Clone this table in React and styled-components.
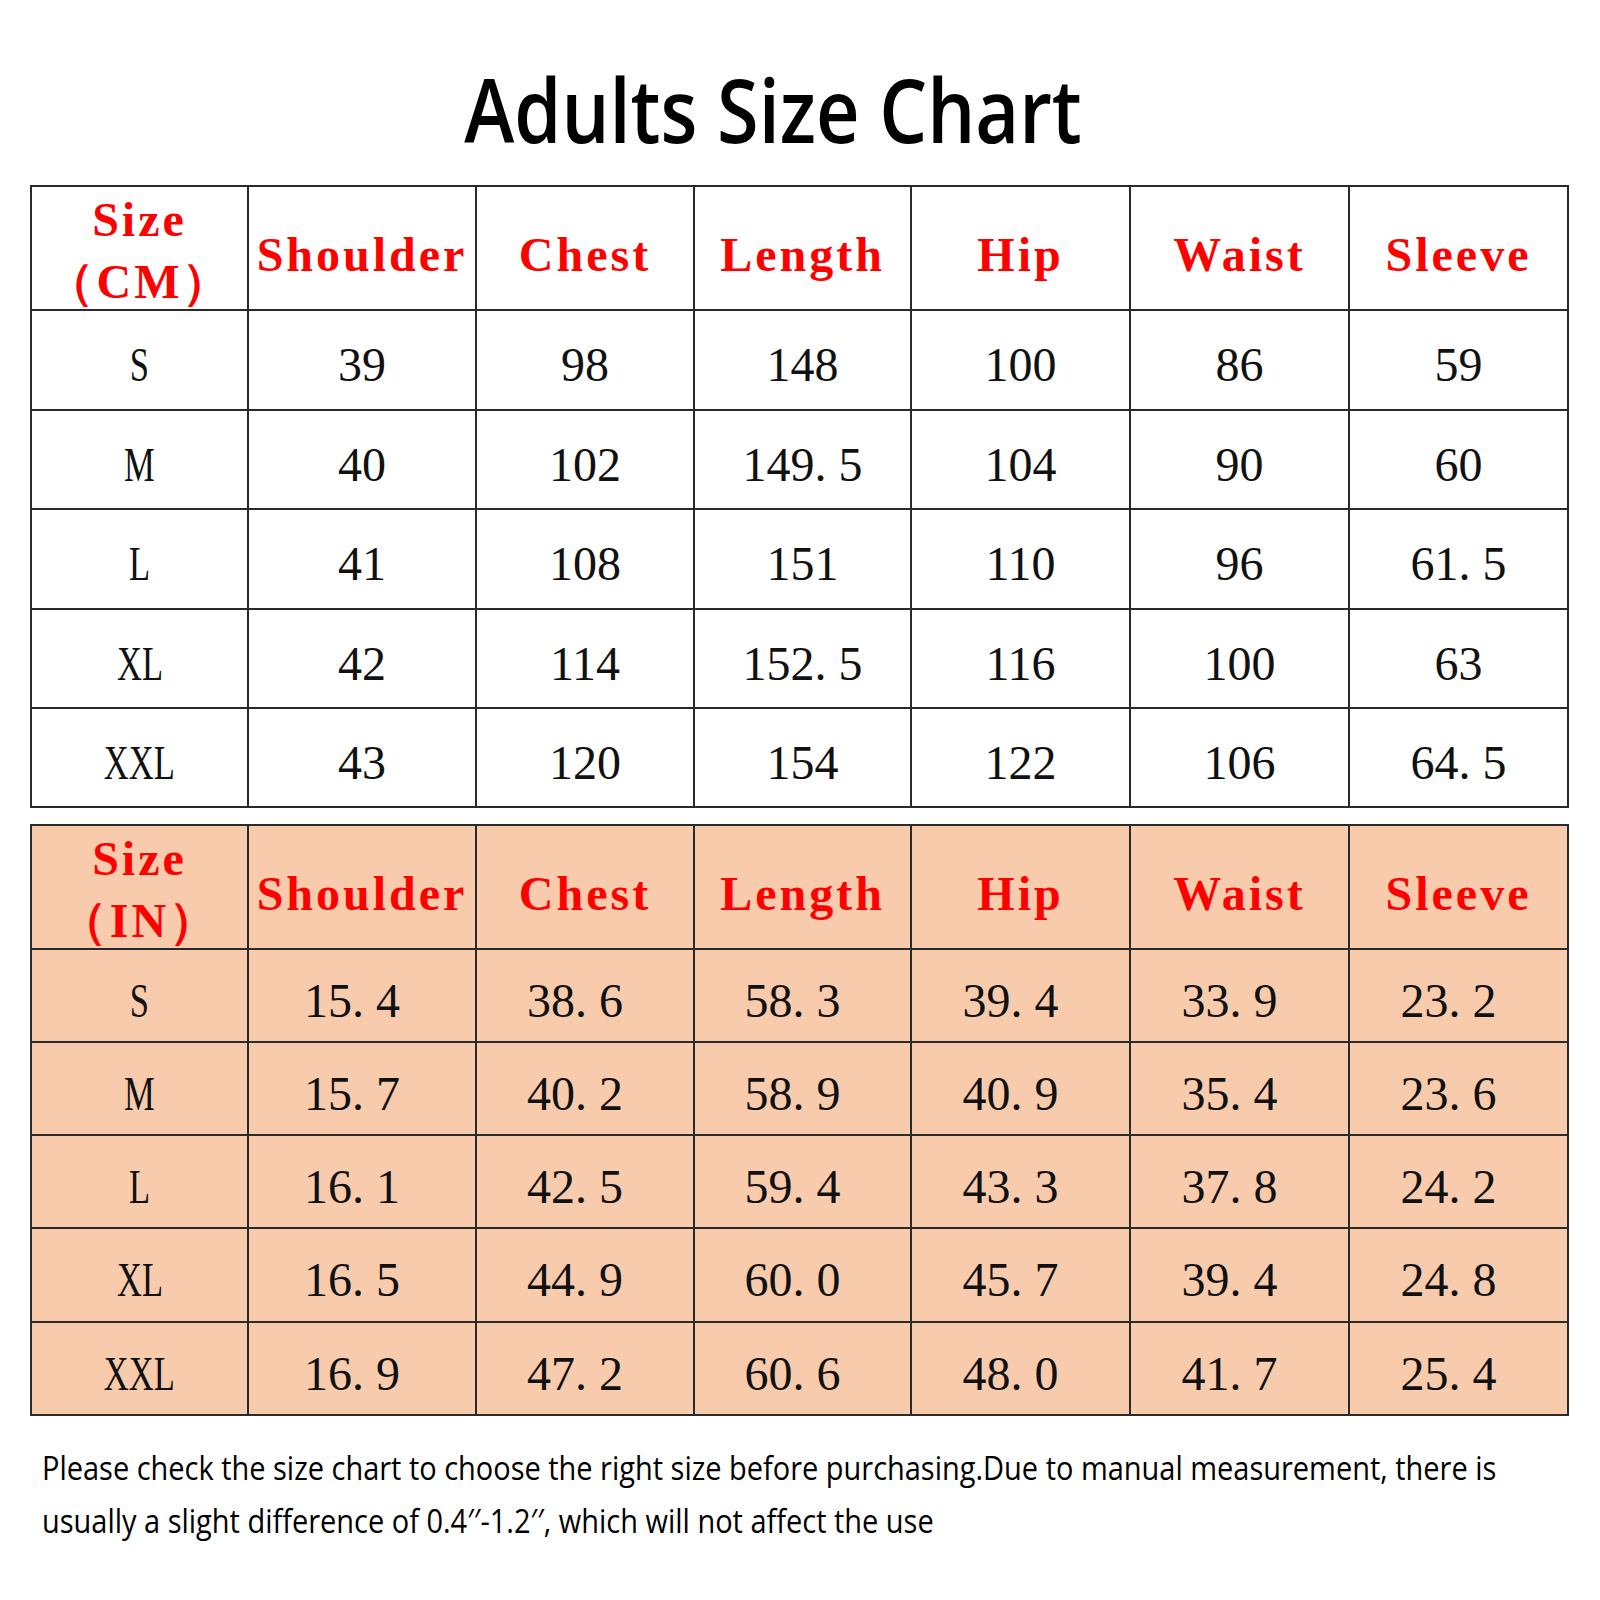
import React from 'react';
import styled, { createGlobalStyle } from 'styled-components';

const GlobalStyle = createGlobalStyle`
  html, body {
    margin: 0;
    padding: 0;
    background: #fff;
  }
`;

const header = ['Shoulder', 'Chest', 'Length', 'Hip', 'Waist', 'Sleeve'];

const cmRows = [
  ['S', '39', '98', '148', '100', '86', '59'],
  ['M', '40', '102', '149.5', '104', '90', '60'],
  ['L', '41', '108', '151', '110', '96', '61.5'],
  ['XL', '42', '114', '152.5', '116', '100', '63'],
  ['XXL', '43', '120', '154', '122', '106', '64.5'],
];

const inRows = [
  ['S', '15.4', '38.6', '58.3', '39.4', '33.9', '23.2'],
  ['M', '15.7', '40.2', '58.9', '40.9', '35.4', '23.6'],
  ['L', '16.1', '42.5', '59.4', '43.3', '37.8', '24.2'],
  ['XL', '16.5', '44.9', '60.0', '45.7', '39.4', '24.8'],
  ['XXL', '16.9', '47.2', '60.6', '48.0', '41.7', '25.4'],
];

// numbers in the chart render with a full-width dot
function Num({ value }) {
  const parts = value.split('.');
  if (parts.length === 1) return value;
  return (
    <>
      {parts[0]}
      <Dot>.</Dot>
      {parts[1]}
    </>
  );
}

function SizeTable({ unit, rows, rowHeights, tint, shift }) {
  return (
    <Grid $rows={rowHeights}>
      <HeadCell $tint={tint} $stack>
        <span>Size</span>
        <span>（{unit}）</span>
      </HeadCell>
      {header.map((h) => (
        <HeadCell key={h} $tint={tint}>{h}</HeadCell>
      ))}
      {rows.map((row) =>
        row.map((v, i) => (
          <Cell key={row[0] + i} $tint={tint} $shift={i === 0 ? 0 : shift}>
            {i === 0 ? <Narrow>{v}</Narrow> : <Num value={v} />}
          </Cell>
        ))
      )}
    </Grid>
  );
}

export default function App() {
  return (
    <Page>
      <GlobalStyle />
      <Title>
        <TitleText>Adults Size Chart</TitleText>
      </Title>
      <SizeTable unit="CM" rows={cmRows} tint="#fff" shift={0}
        rowHeights="122px 98px 97px 98px 97px 97px" />
      <Spacer />
      <SizeTable unit="IN" rows={inRows} tint="#f8cbad" shift={20}
        rowHeights="122px 91px 91px 91px 92px 91px" />
      <Note>
        <NoteText>
          Please check the size chart to choose the right size before purchasing.Due to manual measurement, there is
          <br />
          usually a slight difference of 0.4′′-1.2′′, which will not affect the use
        </NoteText>
      </Note>
    </Page>
  );
}

const Page = styled.div`
  width: 1600px;
  padding: 65px 31px 40px 30px;
  box-sizing: border-box;
`;

const Title = styled.h1`
  margin: 0 0 32px;
  padding-right: 52px;
  text-align: center;
  font-family: "Open Sans", "Liberation Sans", sans-serif;
  font-weight: 600;
  font-size: 88px;
  line-height: 88px;
  color: #000;
`;

const TitleText = styled.span`
  display: inline-block;
  transform: scaleX(0.86);
  transform-origin: center;
  white-space: nowrap;
`;

const Grid = styled.div`
  display: grid;
  grid-template-columns: 215px 226px 216px 215px 217px 217px 217px;
  grid-template-rows: ${(p) => p.$rows};
  gap: 2px;
  padding: 2px;
  width: fit-content;
  background: #2a2a2a;
`;

const Spacer = styled.div`
  height: 16px;
`;

const HeadCell = styled.div`
  display: flex;
  flex-direction: ${(p) => (p.$stack ? 'column' : 'row')};
  align-items: center;
  justify-content: center;
  padding-top: ${(p) => (p.$stack ? '6px' : '14px')};
  box-sizing: border-box;
  background: ${(p) => p.$tint};
  color: #ff0000;
  font-family: "Liberation Serif", "Times New Roman", serif;
  font-weight: 700;
  font-size: 48px;
  line-height: ${(p) => (p.$stack ? '62px' : '1')};
  letter-spacing: 3px;
  white-space: nowrap;
`;

const Cell = styled.div`
  display: flex;
  align-items: center;
  justify-content: center;
  padding-top: 10px;
  padding-right: ${(p) => p.$shift}px;
  box-sizing: border-box;
  background: ${(p) => p.$tint};
  color: #111;
  font-family: "Liberation Serif", "Times New Roman", serif;
  font-size: 48px;
  line-height: 1;
  white-space: nowrap;
`;

const Narrow = styled.span`
  display: inline-block;
  transform: scaleX(0.72);
`;

const Dot = styled.span`
  display: inline-block;
  width: 0.5em;
  text-align: left;
`;

const Note = styled.div`
  margin-top: 25px;
  padding-left: 12px;
`;

const NoteText = styled.p`
  margin: 0;
  font-family: "Open Sans", "Liberation Sans", sans-serif;
  font-size: 32px;
  line-height: 53px;
  color: #000;
  white-space: nowrap;
  display: inline-block;
  transform: scaleX(0.905);
  transform-origin: left center;
`;
